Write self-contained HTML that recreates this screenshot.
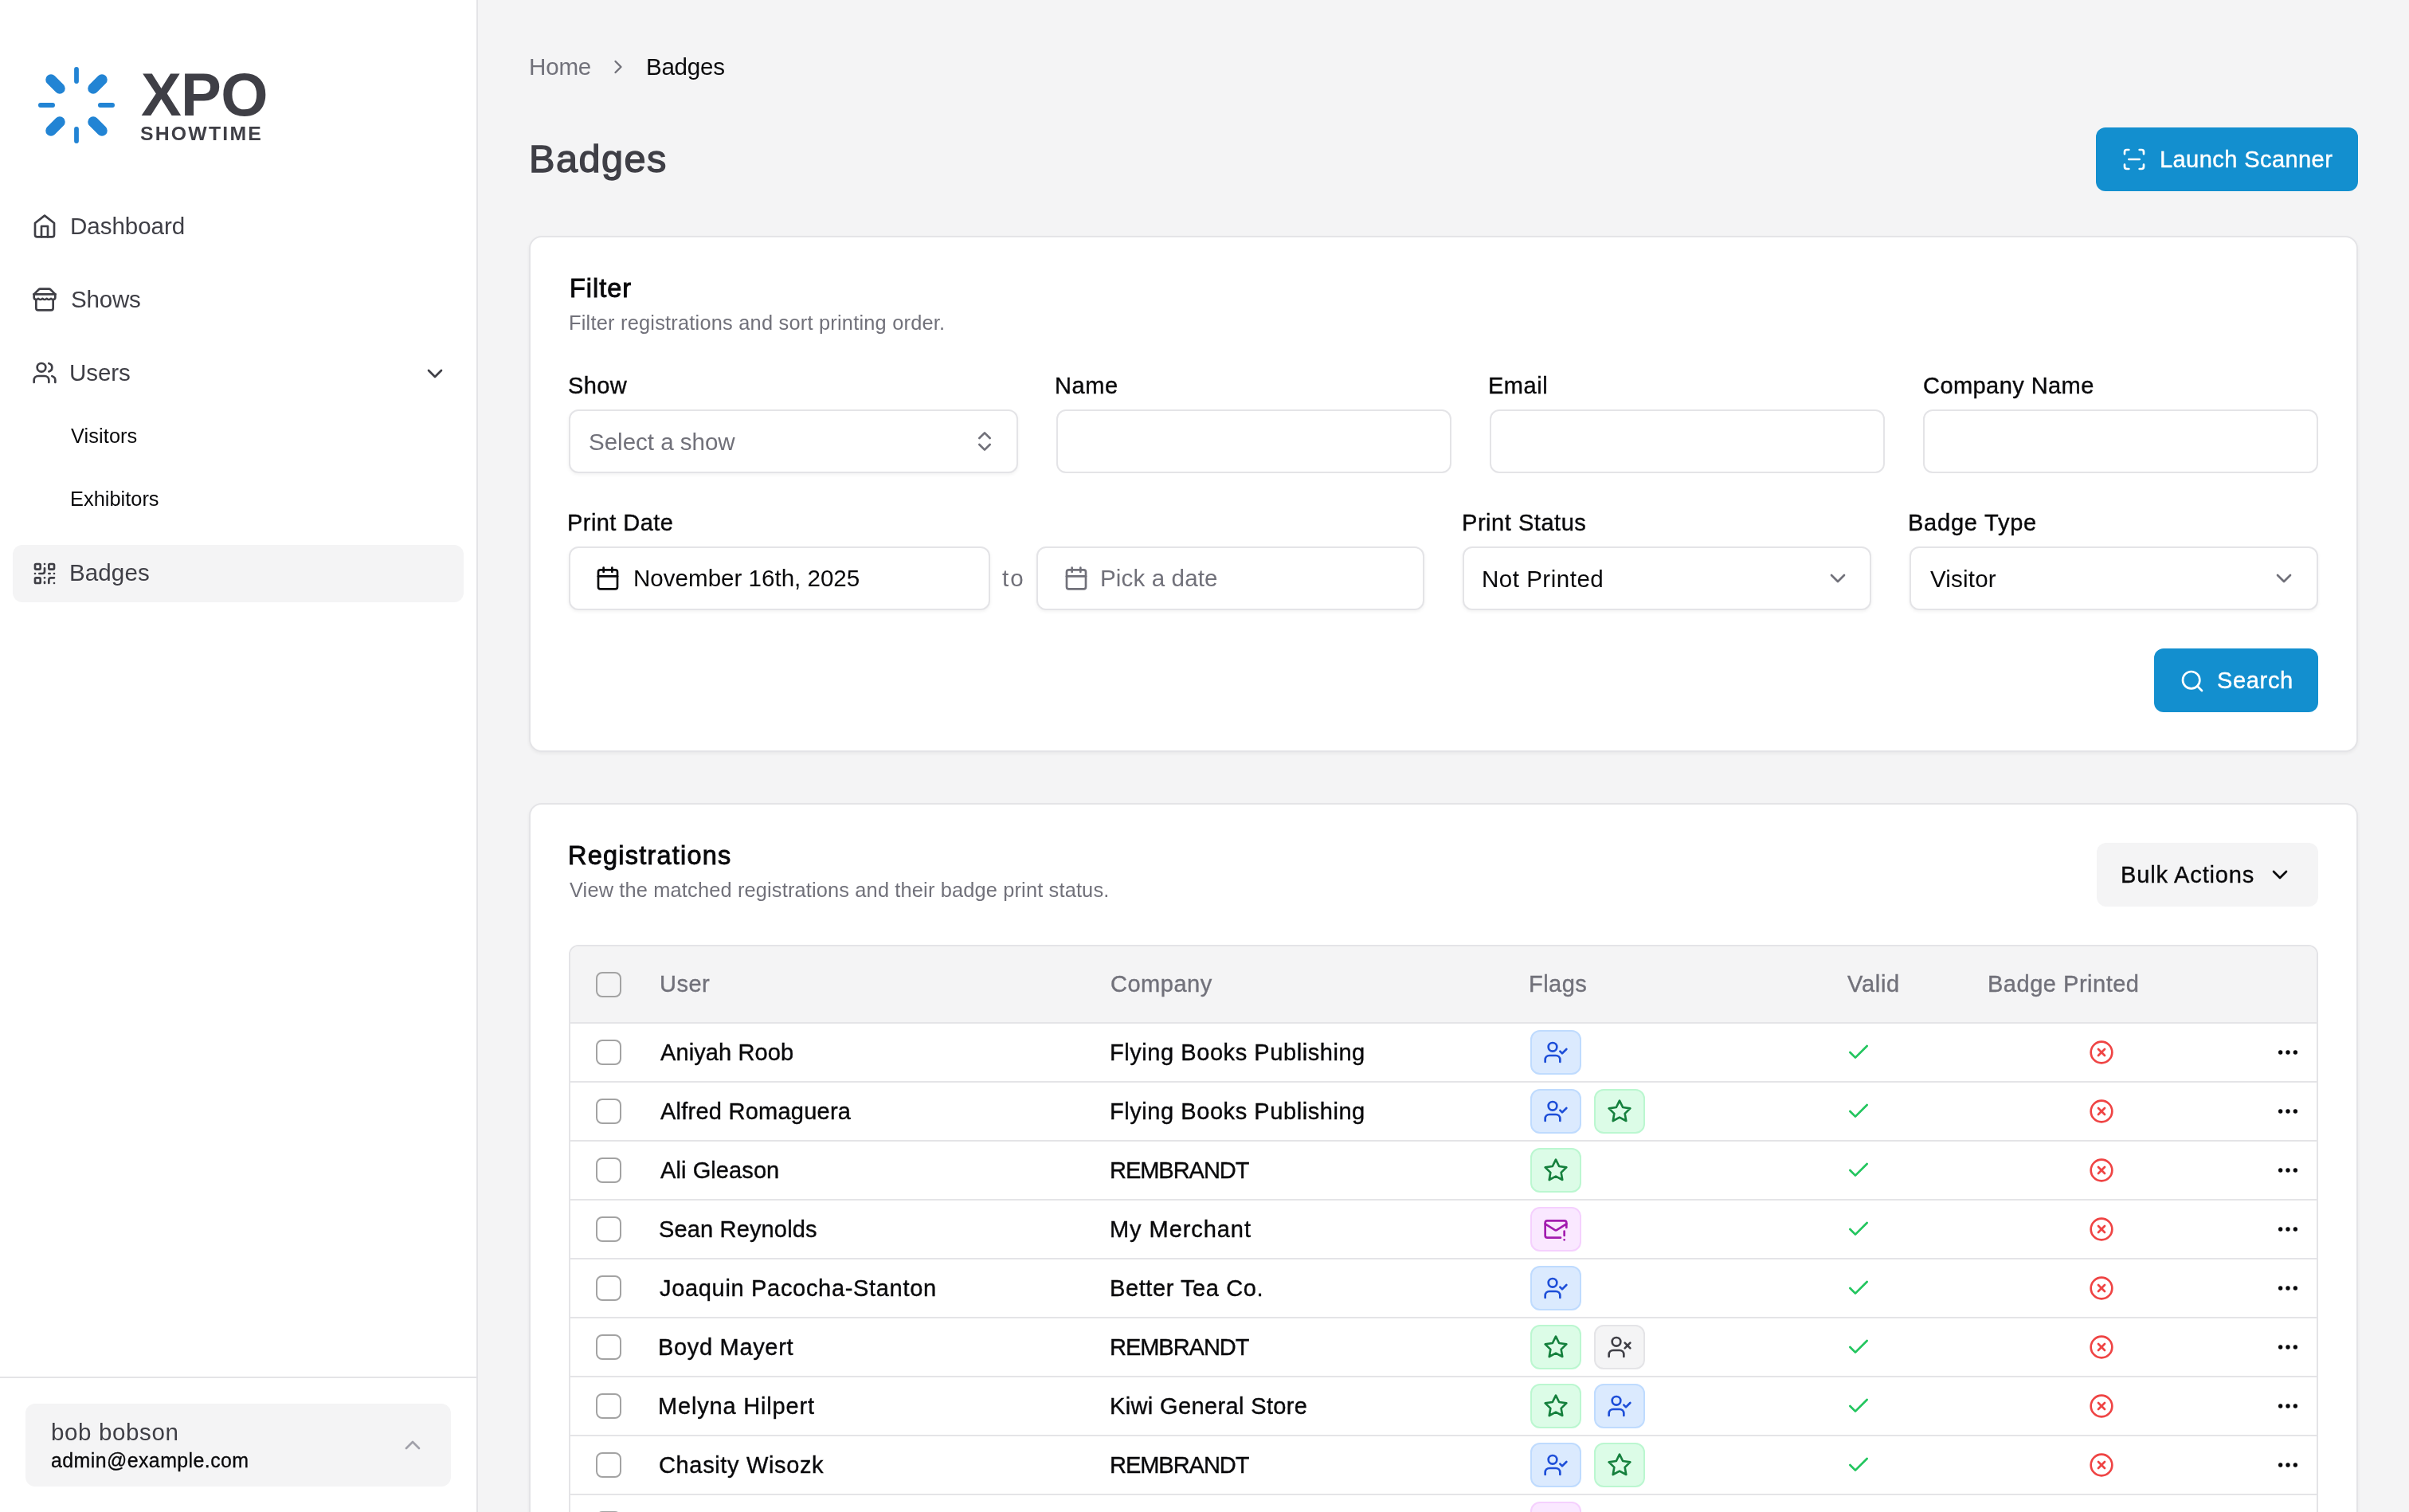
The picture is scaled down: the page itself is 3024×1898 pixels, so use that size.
<!DOCTYPE html><html><head><meta charset="utf-8"><style>
html{zoom:2}@media (max-width:2200px){html{zoom:1}}body{margin:0;width:1512px;height:949px;overflow:hidden;position:relative;background:#f4f4f5;font-family:"Liberation Sans",sans-serif}
.t{position:absolute;white-space:nowrap;line-height:1;will-change:transform}
</style></head><body>
<div style="position:absolute;left:0.00px;top:0.00px;width:299.00px;height:949.00px;background:#fff"></div>
<div style="position:absolute;left:299.00px;top:0.00px;width:1.00px;height:949.00px;background:#e4e4e7"></div>
<svg style="position:absolute;left:23px;top:41px" width="50" height="50" viewBox="46 82 100 100"><g stroke="#2284d4" stroke-linecap="round" fill="none"><path stroke-width="5.8" d="M96 86.9V102.1M96 161.9V177.1M50.9 132H66.1M125.9 132H141.1"/><path stroke-width="13.5" d="M75 111L64 100M117 111L128 100M75 153L64 164M117 153L128 164"/></g></svg>
<div class="t" style="left:88.4px;top:40.69px;font-size:38.1px;font-weight:700;color:#3f3f46;letter-spacing:-0.35px">XPO</div>
<div class="t" style="left:88px;top:78px;font-size:12.4px;font-weight:700;color:#3f3f46;letter-spacing:1.1px">SHOWTIME</div>
<svg style="position:absolute;left:20.00px;top:134.00px" width="16" height="16" viewBox="0 0 24 24" fill="none" stroke="#3f3f46" stroke-width="2" stroke-linecap="round" stroke-linejoin="round"><path d="m3 9 9-7 9 7v11a2 2 0 0 1-2 2H5a2 2 0 0 1-2-2z"/><polyline points="9 22 9 12 15 12 15 22"/></svg>
<svg style="position:absolute;left:20.00px;top:180.00px" width="16" height="16" viewBox="0 0 24 24" fill="none" stroke="#3f3f46" stroke-width="2" stroke-linecap="round" stroke-linejoin="round"><path d="m2 7 4.41-4.41A2 2 0 0 1 7.83 2h8.34a2 2 0 0 1 1.42.59L22 7"/><path d="M4 12v8a2 2 0 0 0 2 2h12a2 2 0 0 0 2-2v-8"/><path d="M2 7h20"/><path d="M22 7v3a2 2 0 0 1-2 2a2.7 2.7 0 0 1-1.59-.63.7.7 0 0 0-.82 0A2.7 2.7 0 0 1 16 12a2.7 2.7 0 0 1-1.59-.63.7.7 0 0 0-.82 0A2.7 2.7 0 0 1 12 12a2.7 2.7 0 0 1-1.59-.63.7.7 0 0 0-.82 0A2.7 2.7 0 0 1 8 12a2.7 2.7 0 0 1-1.59-.63.7.7 0 0 0-.82 0A2.7 2.7 0 0 1 4 12a2 2 0 0 1-2-2V7"/></svg>
<svg style="position:absolute;left:20.00px;top:226.00px" width="16" height="16" viewBox="0 0 24 24" fill="none" stroke="#3f3f46" stroke-width="2" stroke-linecap="round" stroke-linejoin="round"><path d="M16 21v-2a4 4 0 0 0-4-4H6a4 4 0 0 0-4 4v2"/><circle cx="9" cy="7" r="4"/><path d="M22 21v-2a4 4 0 0 0-3-3.87"/><path d="M16 3.13a4 4 0 0 1 0 7.75"/></svg>
<svg style="position:absolute;left:265.00px;top:226.25px" width="16" height="16" viewBox="0 0 24 24" fill="none" stroke="#3f3f46" stroke-width="2" stroke-linecap="round" stroke-linejoin="round"><path d="m6 9 6 6 6-6"/></svg>
<div style="position:absolute;left:8.00px;top:342.00px;width:283.00px;height:36.00px;background:#f4f4f5;border-radius:6px"></div>
<svg style="position:absolute;left:20.00px;top:352.00px" width="16" height="16" viewBox="0 0 24 24" fill="none" stroke="#3f3f46" stroke-width="2" stroke-linecap="round" stroke-linejoin="round"><rect width="5" height="5" x="3" y="3" rx="1"/><rect width="5" height="5" x="16" y="3" rx="1"/><rect width="5" height="5" x="3" y="16" rx="1"/><path d="M21 16h-3a2 2 0 0 0-2 2v3"/><path d="M21 21v.01"/><path d="M12 7v3a2 2 0 0 1-2 2H7"/><path d="M3 12h.01"/><path d="M12 3h.01"/><path d="M12 16v.01"/><path d="M16 12h1"/><path d="M21 12v.01"/><path d="M12 21v-1"/></svg>
<div style="position:absolute;left:0.00px;top:864.00px;width:299.00px;height:1.00px;background:#e4e4e7"></div>
<div style="position:absolute;left:16.00px;top:881.00px;width:267.00px;height:52.00px;background:#f4f4f5;border-radius:6px"></div>
<svg style="position:absolute;left:251.00px;top:899.00px" width="16" height="16" viewBox="0 0 24 24" fill="none" stroke="#a1a1aa" stroke-width="2" stroke-linecap="round" stroke-linejoin="round"><path d="m18 15-6-6-6 6"/></svg>
<svg style="position:absolute;left:380.85px;top:35.05px" width="14" height="14" viewBox="0 0 24 24" fill="none" stroke="#71717a" stroke-width="2" stroke-linecap="round" stroke-linejoin="round"><path d="m9 18 6-6-6-6"/></svg>
<div style="position:absolute;left:1315.50px;top:80.00px;width:164.50px;height:40.00px;background:#138fcf;border-radius:6px"></div>
<svg style="position:absolute;left:1331.30px;top:92.20px" width="16" height="16" viewBox="0 0 24 24" fill="none" stroke="#fff" stroke-width="2" stroke-linecap="round" stroke-linejoin="round"><path d="M3 7V5a2 2 0 0 1 2-2h2"/><path d="M17 3h2a2 2 0 0 1 2 2v2"/><path d="M21 17v2a2 2 0 0 1-2 2h-2"/><path d="M7 21H5a2 2 0 0 1-2-2v-2"/><path d="M7 12h10"/></svg>
<div style="position:absolute;left:332.00px;top:148.00px;width:1148.00px;height:324.00px;background:#fff;border:1px solid #e4e4e7;box-sizing:border-box;border-radius:8px;box-shadow:0 1px 2px rgba(0,0,0,0.05)"></div>
<div style="position:absolute;left:357.00px;top:257.00px;width:282.00px;height:40.00px;background:#fff;border:1px solid #e4e4e7;box-sizing:border-box;border-radius:6px;box-shadow:0 1px 2px rgba(0,0,0,0.05)"></div>
<div style="position:absolute;left:663.00px;top:257.00px;width:248.00px;height:40.00px;background:#fff;border:1px solid #e4e4e7;box-sizing:border-box;border-radius:6px"></div>
<div style="position:absolute;left:935.00px;top:257.00px;width:248.00px;height:40.00px;background:#fff;border:1px solid #e4e4e7;box-sizing:border-box;border-radius:6px"></div>
<div style="position:absolute;left:1207.00px;top:257.00px;width:248.00px;height:40.00px;background:#fff;border:1px solid #e4e4e7;box-sizing:border-box;border-radius:6px"></div>
<svg style="position:absolute;left:610.00px;top:269.00px" width="16" height="16" viewBox="0 0 24 24" fill="none" stroke="#71717a" stroke-width="2" stroke-linecap="round" stroke-linejoin="round"><path d="m7 15 5 5 5-5"/><path d="m7 9 5-5 5 5"/></svg>
<div style="position:absolute;left:357.00px;top:343.00px;width:264.50px;height:40.00px;background:#fff;border:1px solid #e4e4e7;box-sizing:border-box;border-radius:6px;box-shadow:0 1px 2px rgba(0,0,0,0.05)"></div>
<div style="position:absolute;left:650.50px;top:343.00px;width:243.50px;height:40.00px;background:#fff;border:1px solid #e4e4e7;box-sizing:border-box;border-radius:6px;box-shadow:0 1px 2px rgba(0,0,0,0.05)"></div>
<div style="position:absolute;left:918.00px;top:343.00px;width:256.50px;height:40.00px;background:#fff;border:1px solid #e4e4e7;box-sizing:border-box;border-radius:6px;box-shadow:0 1px 2px rgba(0,0,0,0.05)"></div>
<div style="position:absolute;left:1198.50px;top:343.00px;width:256.50px;height:40.00px;background:#fff;border:1px solid #e4e4e7;box-sizing:border-box;border-radius:6px;box-shadow:0 1px 2px rgba(0,0,0,0.05)"></div>
<svg style="position:absolute;left:373.50px;top:355.00px" width="16" height="16" viewBox="0 0 24 24" fill="none" stroke="#09090b" stroke-width="2" stroke-linecap="round" stroke-linejoin="round"><path d="M8 2v4"/><path d="M16 2v4"/><rect width="18" height="18" x="3" y="4" rx="2"/><path d="M3 10h18"/></svg>
<svg style="position:absolute;left:667.50px;top:355.00px" width="16" height="16" viewBox="0 0 24 24" fill="none" stroke="#71717a" stroke-width="2" stroke-linecap="round" stroke-linejoin="round"><path d="M8 2v4"/><path d="M16 2v4"/><rect width="18" height="18" x="3" y="4" rx="2"/><path d="M3 10h18"/></svg>
<svg style="position:absolute;left:1145.40px;top:355.00px" width="16" height="16" viewBox="0 0 24 24" fill="none" stroke="#71717a" stroke-width="2" stroke-linecap="round" stroke-linejoin="round"><path d="m6 9 6 6 6-6"/></svg>
<svg style="position:absolute;left:1425.70px;top:355.00px" width="16" height="16" viewBox="0 0 24 24" fill="none" stroke="#71717a" stroke-width="2" stroke-linecap="round" stroke-linejoin="round"><path d="m6 9 6 6 6-6"/></svg>
<div style="position:absolute;left:1352.00px;top:407.00px;width:103.00px;height:40.00px;background:#138fcf;border-radius:6px"></div>
<svg style="position:absolute;left:1368.00px;top:419.40px" width="16" height="16" viewBox="0 0 24 24" fill="none" stroke="#fff" stroke-width="2" stroke-linecap="round" stroke-linejoin="round"><circle cx="11" cy="11" r="8"/><path d="m21 21-4.3-4.3"/></svg>
<div style="position:absolute;left:332.00px;top:504.00px;width:1148.00px;height:600.00px;background:#fff;border:1px solid #e4e4e7;box-sizing:border-box;border-radius:8px;box-shadow:0 1px 2px rgba(0,0,0,0.05)"></div>
<div style="position:absolute;left:1316.00px;top:529.00px;width:139.00px;height:40.00px;background:#f4f4f5;border-radius:6px"></div>
<svg style="position:absolute;left:1423.00px;top:541.00px" width="16" height="16" viewBox="0 0 24 24" fill="none" stroke="#09090b" stroke-width="2" stroke-linecap="round" stroke-linejoin="round"><path d="m6 9 6 6 6-6"/></svg>
<div style="position:absolute;left:357.00px;top:593.00px;width:1098.00px;height:400.00px;border:1px solid #e4e4e7;box-sizing:border-box;border-radius:6px;overflow:hidden"></div>
<div style="position:absolute;left:358.00px;top:594.00px;width:1096.00px;height:47.50px;background:#f4f4f5;border-radius:5px 5px 0 0"></div>
<div style="position:absolute;left:358.00px;top:641.50px;width:1096.00px;height:1.00px;background:#e4e4e7"></div>
<div style="position:absolute;left:358.00px;top:678.50px;width:1096.00px;height:1.00px;background:#e4e4e7"></div>
<div style="position:absolute;left:358.00px;top:715.50px;width:1096.00px;height:1.00px;background:#e4e4e7"></div>
<div style="position:absolute;left:358.00px;top:752.50px;width:1096.00px;height:1.00px;background:#e4e4e7"></div>
<div style="position:absolute;left:358.00px;top:789.50px;width:1096.00px;height:1.00px;background:#e4e4e7"></div>
<div style="position:absolute;left:358.00px;top:826.50px;width:1096.00px;height:1.00px;background:#e4e4e7"></div>
<div style="position:absolute;left:358.00px;top:863.50px;width:1096.00px;height:1.00px;background:#e4e4e7"></div>
<div style="position:absolute;left:358.00px;top:900.50px;width:1096.00px;height:1.00px;background:#e4e4e7"></div>
<div style="position:absolute;left:358.00px;top:937.50px;width:1096.00px;height:1.00px;background:#e4e4e7"></div>
<div style="position:absolute;left:374.00px;top:610.00px;width:16.00px;height:16.00px;border:1px solid #a3a3a3;box-sizing:border-box;border-radius:4px"></div>
<div style="position:absolute;left:374.00px;top:652.50px;width:16.00px;height:16.00px;border:1px solid #a3a3a3;box-sizing:border-box;border-radius:4px"></div>
<div style="position:absolute;left:960.50px;top:646.50px;width:32.00px;height:28.00px;background:#dbeafe;border:1px solid #bfdbfe;box-sizing:border-box;border-radius:6px"></div>
<svg style="position:absolute;left:968.30px;top:652.50px" width="16" height="16" viewBox="0 0 24 24" fill="none" stroke="#1d4ed8" stroke-width="2" stroke-linecap="round" stroke-linejoin="round"><path d="M16 21v-2a4 4 0 0 0-4-4H6a4 4 0 0 0-4 4v2"/><circle cx="9" cy="7" r="4"/><polyline points="16 11 18 13 22 9"/></svg>
<svg style="position:absolute;left:1158.40px;top:652.50px" width="16" height="16" viewBox="0 0 24 24" fill="none" stroke="#22c55e" stroke-width="2" stroke-linecap="round" stroke-linejoin="round"><path d="M20 6 9 17l-5-5"/></svg>
<svg style="position:absolute;left:1310.80px;top:652.50px" width="16" height="16" viewBox="0 0 24 24" fill="none" stroke="#ef4444" stroke-width="2" stroke-linecap="round" stroke-linejoin="round"><circle cx="12" cy="12" r="10"/><path d="m15 9-6 6"/><path d="m9 9 6 6"/></svg>
<svg style="position:absolute;left:1427.80px;top:652.50px" width="16" height="16" viewBox="0 0 24 24" fill="none" stroke="#09090b" stroke-width="2" stroke-linecap="round" stroke-linejoin="round"><circle cx="12" cy="12" r="1"/><circle cx="19" cy="12" r="1"/><circle cx="5" cy="12" r="1"/></svg>
<div style="position:absolute;left:374.00px;top:689.50px;width:16.00px;height:16.00px;border:1px solid #a3a3a3;box-sizing:border-box;border-radius:4px"></div>
<div style="position:absolute;left:960.50px;top:683.50px;width:32.00px;height:28.00px;background:#dbeafe;border:1px solid #bfdbfe;box-sizing:border-box;border-radius:6px"></div>
<svg style="position:absolute;left:968.30px;top:689.50px" width="16" height="16" viewBox="0 0 24 24" fill="none" stroke="#1d4ed8" stroke-width="2" stroke-linecap="round" stroke-linejoin="round"><path d="M16 21v-2a4 4 0 0 0-4-4H6a4 4 0 0 0-4 4v2"/><circle cx="9" cy="7" r="4"/><polyline points="16 11 18 13 22 9"/></svg>
<div style="position:absolute;left:1000.50px;top:683.50px;width:32.00px;height:28.00px;background:#dcfce7;border:1px solid #bbf7d0;box-sizing:border-box;border-radius:6px"></div>
<svg style="position:absolute;left:1008.30px;top:689.50px" width="16" height="16" viewBox="0 0 24 24" fill="none" stroke="#15803d" stroke-width="2" stroke-linecap="round" stroke-linejoin="round"><polygon points="12 2 15.09 8.26 22 9.27 17 14.14 18.18 21.02 12 17.77 5.82 21.02 7 14.14 2 9.27 8.91 8.26 12 2"/></svg>
<svg style="position:absolute;left:1158.40px;top:689.50px" width="16" height="16" viewBox="0 0 24 24" fill="none" stroke="#22c55e" stroke-width="2" stroke-linecap="round" stroke-linejoin="round"><path d="M20 6 9 17l-5-5"/></svg>
<svg style="position:absolute;left:1310.80px;top:689.50px" width="16" height="16" viewBox="0 0 24 24" fill="none" stroke="#ef4444" stroke-width="2" stroke-linecap="round" stroke-linejoin="round"><circle cx="12" cy="12" r="10"/><path d="m15 9-6 6"/><path d="m9 9 6 6"/></svg>
<svg style="position:absolute;left:1427.80px;top:689.50px" width="16" height="16" viewBox="0 0 24 24" fill="none" stroke="#09090b" stroke-width="2" stroke-linecap="round" stroke-linejoin="round"><circle cx="12" cy="12" r="1"/><circle cx="19" cy="12" r="1"/><circle cx="5" cy="12" r="1"/></svg>
<div style="position:absolute;left:374.00px;top:726.50px;width:16.00px;height:16.00px;border:1px solid #a3a3a3;box-sizing:border-box;border-radius:4px"></div>
<div style="position:absolute;left:960.50px;top:720.50px;width:32.00px;height:28.00px;background:#dcfce7;border:1px solid #bbf7d0;box-sizing:border-box;border-radius:6px"></div>
<svg style="position:absolute;left:968.30px;top:726.50px" width="16" height="16" viewBox="0 0 24 24" fill="none" stroke="#15803d" stroke-width="2" stroke-linecap="round" stroke-linejoin="round"><polygon points="12 2 15.09 8.26 22 9.27 17 14.14 18.18 21.02 12 17.77 5.82 21.02 7 14.14 2 9.27 8.91 8.26 12 2"/></svg>
<svg style="position:absolute;left:1158.40px;top:726.50px" width="16" height="16" viewBox="0 0 24 24" fill="none" stroke="#22c55e" stroke-width="2" stroke-linecap="round" stroke-linejoin="round"><path d="M20 6 9 17l-5-5"/></svg>
<svg style="position:absolute;left:1310.80px;top:726.50px" width="16" height="16" viewBox="0 0 24 24" fill="none" stroke="#ef4444" stroke-width="2" stroke-linecap="round" stroke-linejoin="round"><circle cx="12" cy="12" r="10"/><path d="m15 9-6 6"/><path d="m9 9 6 6"/></svg>
<svg style="position:absolute;left:1427.80px;top:726.50px" width="16" height="16" viewBox="0 0 24 24" fill="none" stroke="#09090b" stroke-width="2" stroke-linecap="round" stroke-linejoin="round"><circle cx="12" cy="12" r="1"/><circle cx="19" cy="12" r="1"/><circle cx="5" cy="12" r="1"/></svg>
<div style="position:absolute;left:374.00px;top:763.50px;width:16.00px;height:16.00px;border:1px solid #a3a3a3;box-sizing:border-box;border-radius:4px"></div>
<div style="position:absolute;left:960.50px;top:757.50px;width:32.00px;height:28.00px;background:#fae8ff;border:1px solid #f5d0fe;box-sizing:border-box;border-radius:6px"></div>
<svg style="position:absolute;left:968.30px;top:763.50px" width="16" height="16" viewBox="0 0 24 24" fill="none" stroke="#a21caf" stroke-width="2" stroke-linecap="round" stroke-linejoin="round"><path d="M22 10.5V6a2 2 0 0 0-2-2H4a2 2 0 0 0-2 2v12c0 1.1.9 2 2 2h12.5"/><path d="m22 7-8.97 5.7a1.94 1.94 0 0 1-2.06 0L2 7"/><path d="M20 14v4"/><path d="M20 22v.01"/></svg>
<svg style="position:absolute;left:1158.40px;top:763.50px" width="16" height="16" viewBox="0 0 24 24" fill="none" stroke="#22c55e" stroke-width="2" stroke-linecap="round" stroke-linejoin="round"><path d="M20 6 9 17l-5-5"/></svg>
<svg style="position:absolute;left:1310.80px;top:763.50px" width="16" height="16" viewBox="0 0 24 24" fill="none" stroke="#ef4444" stroke-width="2" stroke-linecap="round" stroke-linejoin="round"><circle cx="12" cy="12" r="10"/><path d="m15 9-6 6"/><path d="m9 9 6 6"/></svg>
<svg style="position:absolute;left:1427.80px;top:763.50px" width="16" height="16" viewBox="0 0 24 24" fill="none" stroke="#09090b" stroke-width="2" stroke-linecap="round" stroke-linejoin="round"><circle cx="12" cy="12" r="1"/><circle cx="19" cy="12" r="1"/><circle cx="5" cy="12" r="1"/></svg>
<div style="position:absolute;left:374.00px;top:800.50px;width:16.00px;height:16.00px;border:1px solid #a3a3a3;box-sizing:border-box;border-radius:4px"></div>
<div style="position:absolute;left:960.50px;top:794.50px;width:32.00px;height:28.00px;background:#dbeafe;border:1px solid #bfdbfe;box-sizing:border-box;border-radius:6px"></div>
<svg style="position:absolute;left:968.30px;top:800.50px" width="16" height="16" viewBox="0 0 24 24" fill="none" stroke="#1d4ed8" stroke-width="2" stroke-linecap="round" stroke-linejoin="round"><path d="M16 21v-2a4 4 0 0 0-4-4H6a4 4 0 0 0-4 4v2"/><circle cx="9" cy="7" r="4"/><polyline points="16 11 18 13 22 9"/></svg>
<svg style="position:absolute;left:1158.40px;top:800.50px" width="16" height="16" viewBox="0 0 24 24" fill="none" stroke="#22c55e" stroke-width="2" stroke-linecap="round" stroke-linejoin="round"><path d="M20 6 9 17l-5-5"/></svg>
<svg style="position:absolute;left:1310.80px;top:800.50px" width="16" height="16" viewBox="0 0 24 24" fill="none" stroke="#ef4444" stroke-width="2" stroke-linecap="round" stroke-linejoin="round"><circle cx="12" cy="12" r="10"/><path d="m15 9-6 6"/><path d="m9 9 6 6"/></svg>
<svg style="position:absolute;left:1427.80px;top:800.50px" width="16" height="16" viewBox="0 0 24 24" fill="none" stroke="#09090b" stroke-width="2" stroke-linecap="round" stroke-linejoin="round"><circle cx="12" cy="12" r="1"/><circle cx="19" cy="12" r="1"/><circle cx="5" cy="12" r="1"/></svg>
<div style="position:absolute;left:374.00px;top:837.50px;width:16.00px;height:16.00px;border:1px solid #a3a3a3;box-sizing:border-box;border-radius:4px"></div>
<div style="position:absolute;left:960.50px;top:831.50px;width:32.00px;height:28.00px;background:#dcfce7;border:1px solid #bbf7d0;box-sizing:border-box;border-radius:6px"></div>
<svg style="position:absolute;left:968.30px;top:837.50px" width="16" height="16" viewBox="0 0 24 24" fill="none" stroke="#15803d" stroke-width="2" stroke-linecap="round" stroke-linejoin="round"><polygon points="12 2 15.09 8.26 22 9.27 17 14.14 18.18 21.02 12 17.77 5.82 21.02 7 14.14 2 9.27 8.91 8.26 12 2"/></svg>
<div style="position:absolute;left:1000.50px;top:831.50px;width:32.00px;height:28.00px;background:#f4f4f5;border:1px solid #e4e4e7;box-sizing:border-box;border-radius:6px"></div>
<svg style="position:absolute;left:1008.30px;top:837.50px" width="16" height="16" viewBox="0 0 24 24" fill="none" stroke="#3f3f46" stroke-width="2" stroke-linecap="round" stroke-linejoin="round"><path d="M16 21v-2a4 4 0 0 0-4-4H6a4 4 0 0 0-4 4v2"/><circle cx="9" cy="7" r="4"/><line x1="17" x2="22" y1="8" y2="13"/><line x1="22" x2="17" y1="8" y2="13"/></svg>
<svg style="position:absolute;left:1158.40px;top:837.50px" width="16" height="16" viewBox="0 0 24 24" fill="none" stroke="#22c55e" stroke-width="2" stroke-linecap="round" stroke-linejoin="round"><path d="M20 6 9 17l-5-5"/></svg>
<svg style="position:absolute;left:1310.80px;top:837.50px" width="16" height="16" viewBox="0 0 24 24" fill="none" stroke="#ef4444" stroke-width="2" stroke-linecap="round" stroke-linejoin="round"><circle cx="12" cy="12" r="10"/><path d="m15 9-6 6"/><path d="m9 9 6 6"/></svg>
<svg style="position:absolute;left:1427.80px;top:837.50px" width="16" height="16" viewBox="0 0 24 24" fill="none" stroke="#09090b" stroke-width="2" stroke-linecap="round" stroke-linejoin="round"><circle cx="12" cy="12" r="1"/><circle cx="19" cy="12" r="1"/><circle cx="5" cy="12" r="1"/></svg>
<div style="position:absolute;left:374.00px;top:874.50px;width:16.00px;height:16.00px;border:1px solid #a3a3a3;box-sizing:border-box;border-radius:4px"></div>
<div style="position:absolute;left:960.50px;top:868.50px;width:32.00px;height:28.00px;background:#dcfce7;border:1px solid #bbf7d0;box-sizing:border-box;border-radius:6px"></div>
<svg style="position:absolute;left:968.30px;top:874.50px" width="16" height="16" viewBox="0 0 24 24" fill="none" stroke="#15803d" stroke-width="2" stroke-linecap="round" stroke-linejoin="round"><polygon points="12 2 15.09 8.26 22 9.27 17 14.14 18.18 21.02 12 17.77 5.82 21.02 7 14.14 2 9.27 8.91 8.26 12 2"/></svg>
<div style="position:absolute;left:1000.50px;top:868.50px;width:32.00px;height:28.00px;background:#dbeafe;border:1px solid #bfdbfe;box-sizing:border-box;border-radius:6px"></div>
<svg style="position:absolute;left:1008.30px;top:874.50px" width="16" height="16" viewBox="0 0 24 24" fill="none" stroke="#1d4ed8" stroke-width="2" stroke-linecap="round" stroke-linejoin="round"><path d="M16 21v-2a4 4 0 0 0-4-4H6a4 4 0 0 0-4 4v2"/><circle cx="9" cy="7" r="4"/><polyline points="16 11 18 13 22 9"/></svg>
<svg style="position:absolute;left:1158.40px;top:874.50px" width="16" height="16" viewBox="0 0 24 24" fill="none" stroke="#22c55e" stroke-width="2" stroke-linecap="round" stroke-linejoin="round"><path d="M20 6 9 17l-5-5"/></svg>
<svg style="position:absolute;left:1310.80px;top:874.50px" width="16" height="16" viewBox="0 0 24 24" fill="none" stroke="#ef4444" stroke-width="2" stroke-linecap="round" stroke-linejoin="round"><circle cx="12" cy="12" r="10"/><path d="m15 9-6 6"/><path d="m9 9 6 6"/></svg>
<svg style="position:absolute;left:1427.80px;top:874.50px" width="16" height="16" viewBox="0 0 24 24" fill="none" stroke="#09090b" stroke-width="2" stroke-linecap="round" stroke-linejoin="round"><circle cx="12" cy="12" r="1"/><circle cx="19" cy="12" r="1"/><circle cx="5" cy="12" r="1"/></svg>
<div style="position:absolute;left:374.00px;top:911.50px;width:16.00px;height:16.00px;border:1px solid #a3a3a3;box-sizing:border-box;border-radius:4px"></div>
<div style="position:absolute;left:960.50px;top:905.50px;width:32.00px;height:28.00px;background:#dbeafe;border:1px solid #bfdbfe;box-sizing:border-box;border-radius:6px"></div>
<svg style="position:absolute;left:968.30px;top:911.50px" width="16" height="16" viewBox="0 0 24 24" fill="none" stroke="#1d4ed8" stroke-width="2" stroke-linecap="round" stroke-linejoin="round"><path d="M16 21v-2a4 4 0 0 0-4-4H6a4 4 0 0 0-4 4v2"/><circle cx="9" cy="7" r="4"/><polyline points="16 11 18 13 22 9"/></svg>
<div style="position:absolute;left:1000.50px;top:905.50px;width:32.00px;height:28.00px;background:#dcfce7;border:1px solid #bbf7d0;box-sizing:border-box;border-radius:6px"></div>
<svg style="position:absolute;left:1008.30px;top:911.50px" width="16" height="16" viewBox="0 0 24 24" fill="none" stroke="#15803d" stroke-width="2" stroke-linecap="round" stroke-linejoin="round"><polygon points="12 2 15.09 8.26 22 9.27 17 14.14 18.18 21.02 12 17.77 5.82 21.02 7 14.14 2 9.27 8.91 8.26 12 2"/></svg>
<svg style="position:absolute;left:1158.40px;top:911.50px" width="16" height="16" viewBox="0 0 24 24" fill="none" stroke="#22c55e" stroke-width="2" stroke-linecap="round" stroke-linejoin="round"><path d="M20 6 9 17l-5-5"/></svg>
<svg style="position:absolute;left:1310.80px;top:911.50px" width="16" height="16" viewBox="0 0 24 24" fill="none" stroke="#ef4444" stroke-width="2" stroke-linecap="round" stroke-linejoin="round"><circle cx="12" cy="12" r="10"/><path d="m15 9-6 6"/><path d="m9 9 6 6"/></svg>
<svg style="position:absolute;left:1427.80px;top:911.50px" width="16" height="16" viewBox="0 0 24 24" fill="none" stroke="#09090b" stroke-width="2" stroke-linecap="round" stroke-linejoin="round"><circle cx="12" cy="12" r="1"/><circle cx="19" cy="12" r="1"/><circle cx="5" cy="12" r="1"/></svg>
<div style="position:absolute;left:374.00px;top:948.50px;width:16.00px;height:16.00px;border:1px solid #a3a3a3;box-sizing:border-box;border-radius:4px"></div>
<div style="position:absolute;left:960.50px;top:942.50px;width:32.00px;height:28.00px;background:#fae8ff;border:1px solid #f5d0fe;box-sizing:border-box;border-radius:6px"></div>
<svg style="position:absolute;left:968.30px;top:948.50px" width="16" height="16" viewBox="0 0 24 24" fill="none" stroke="#a21caf" stroke-width="2" stroke-linecap="round" stroke-linejoin="round"><path d="M22 10.5V6a2 2 0 0 0-2-2H4a2 2 0 0 0-2 2v12c0 1.1.9 2 2 2h12.5"/><path d="m22 7-8.97 5.7a1.94 1.94 0 0 1-2.06 0L2 7"/><path d="M20 14v4"/><path d="M20 22v.01"/></svg>
<svg style="position:absolute;left:1158.40px;top:948.50px" width="16" height="16" viewBox="0 0 24 24" fill="none" stroke="#22c55e" stroke-width="2" stroke-linecap="round" stroke-linejoin="round"><path d="M20 6 9 17l-5-5"/></svg>
<svg style="position:absolute;left:1310.80px;top:948.50px" width="16" height="16" viewBox="0 0 24 24" fill="none" stroke="#ef4444" stroke-width="2" stroke-linecap="round" stroke-linejoin="round"><circle cx="12" cy="12" r="10"/><path d="m15 9-6 6"/><path d="m9 9 6 6"/></svg>
<svg style="position:absolute;left:1427.80px;top:948.50px" width="16" height="16" viewBox="0 0 24 24" fill="none" stroke="#09090b" stroke-width="2" stroke-linecap="round" stroke-linejoin="round"><circle cx="12" cy="12" r="1"/><circle cx="19" cy="12" r="1"/><circle cx="5" cy="12" r="1"/></svg>
<div class="t" style="left:43.90px;top:134.42px;font-size:14.79px;color:#3f3f46;font-weight:400;letter-spacing:-0.037px;">Dashboard</div>
<div class="t" style="left:44.40px;top:180.32px;font-size:14.79px;color:#3f3f46;font-weight:400;letter-spacing:-0.112px;">Shows</div>
<div class="t" style="left:43.70px;top:226.47px;font-size:14.79px;color:#3f3f46;font-weight:400;letter-spacing:-0.050px;">Users</div>
<div class="t" style="left:44.40px;top:267.26px;font-size:12.68px;color:#09090b;font-weight:400;letter-spacing:0.043px;">Visitors</div>
<div class="t" style="left:43.90px;top:307.06px;font-size:12.68px;color:#09090b;font-weight:400;letter-spacing:0.011px;">Exhibitors</div>
<div class="t" style="left:43.60px;top:352.07px;font-size:14.79px;color:#3f3f46;font-weight:400;letter-spacing:0.040px;">Badges</div>
<div class="t" style="left:32.00px;top:891.57px;font-size:14.79px;color:#3f3f46;font-weight:400;letter-spacing:0.300px;">bob bobson</div>
<div class="t" style="left:32.10px;top:910.36px;font-size:12.45px;color:#09090b;font-weight:400;letter-spacing:0.219px;-webkit-text-stroke:0.162px #09090b;">admin@example.com</div>
<div class="t" style="left:331.90px;top:34.47px;font-size:14.79px;color:#71717a;font-weight:400;letter-spacing:-0.100px;">Home</div>
<div class="t" style="left:405.40px;top:34.47px;font-size:14.79px;color:#09090b;font-weight:400;letter-spacing:-0.140px;">Badges</div>
<div class="t" style="left:332.10px;top:87.57px;font-size:24.37px;color:#3f3f46;font-weight:400;letter-spacing:0.710px;-webkit-text-stroke:0.682px #3f3f46;">Badges</div>
<div class="t" style="left:1355.40px;top:92.96px;font-size:14.52px;color:#ffffff;font-weight:400;letter-spacing:0.208px;-webkit-text-stroke:0.189px #ffffff;">Launch Scanner</div>
<div class="t" style="left:357.30px;top:173.04px;font-size:16.25px;color:#09090b;font-weight:400;letter-spacing:0.480px;-webkit-text-stroke:0.455px #09090b;">Filter</div>
<div class="t" style="left:356.90px;top:196.26px;font-size:12.68px;color:#71717a;font-weight:400;letter-spacing:0.112px;">Filter registrations and sort printing order.</div>
<div class="t" style="left:356.60px;top:235.11px;font-size:14.52px;color:#09090b;font-weight:400;letter-spacing:0.200px;-webkit-text-stroke:0.189px #09090b;">Show</div>
<div class="t" style="left:662.20px;top:235.11px;font-size:14.52px;color:#09090b;font-weight:400;letter-spacing:0.300px;-webkit-text-stroke:0.189px #09090b;">Name</div>
<div class="t" style="left:934.00px;top:235.21px;font-size:14.52px;color:#09090b;font-weight:400;letter-spacing:0.250px;-webkit-text-stroke:0.189px #09090b;">Email</div>
<div class="t" style="left:1207.00px;top:235.21px;font-size:14.52px;color:#09090b;font-weight:400;letter-spacing:0.209px;-webkit-text-stroke:0.189px #09090b;">Company Name</div>
<div class="t" style="left:369.60px;top:269.77px;font-size:14.79px;color:#71717a;font-weight:400;letter-spacing:-0.017px;">Select a show</div>
<div class="t" style="left:356.10px;top:321.01px;font-size:14.52px;color:#09090b;font-weight:400;letter-spacing:0.211px;-webkit-text-stroke:0.189px #09090b;">Print Date</div>
<div class="t" style="left:917.30px;top:321.01px;font-size:14.52px;color:#09090b;font-weight:400;letter-spacing:0.264px;-webkit-text-stroke:0.189px #09090b;">Print Status</div>
<div class="t" style="left:1197.40px;top:321.01px;font-size:14.52px;color:#09090b;font-weight:400;letter-spacing:0.378px;-webkit-text-stroke:0.189px #09090b;">Badge Type</div>
<div class="t" style="left:397.50px;top:355.67px;font-size:14.79px;color:#09090b;font-weight:400;letter-spacing:-0.006px;">November 16th, 2025</div>
<div class="t" style="left:629.10px;top:355.67px;font-size:14.79px;color:#71717a;font-weight:400;letter-spacing:1.000px;">to</div>
<div class="t" style="left:690.30px;top:355.67px;font-size:14.79px;color:#71717a;font-weight:400;letter-spacing:0.060px;">Pick a date</div>
<div class="t" style="left:929.80px;top:356.17px;font-size:14.79px;color:#09090b;font-weight:400;letter-spacing:0.240px;">Not Printed</div>
<div class="t" style="left:1211.60px;top:356.17px;font-size:14.79px;color:#09090b;font-weight:400;letter-spacing:0.083px;">Visitor</div>
<div class="t" style="left:1391.70px;top:420.11px;font-size:14.52px;color:#ffffff;font-weight:400;letter-spacing:0.320px;-webkit-text-stroke:0.189px #ffffff;">Search</div>
<div class="t" style="left:356.60px;top:528.94px;font-size:16.25px;color:#09090b;font-weight:400;letter-spacing:0.608px;-webkit-text-stroke:0.455px #09090b;">Registrations</div>
<div class="t" style="left:357.40px;top:552.36px;font-size:12.68px;color:#71717a;font-weight:400;letter-spacing:0.081px;">View the matched registrations and their badge print status.</div>
<div class="t" style="left:1331.20px;top:542.01px;font-size:14.52px;color:#09090b;font-weight:400;letter-spacing:0.418px;-webkit-text-stroke:0.189px #09090b;">Bulk Actions</div>
<div class="t" style="left:413.90px;top:610.61px;font-size:14.52px;color:#71717a;font-weight:400;letter-spacing:0.233px;-webkit-text-stroke:0.189px #71717a;">User</div>
<div class="t" style="left:696.90px;top:610.71px;font-size:14.52px;color:#71717a;font-weight:400;letter-spacing:0.250px;-webkit-text-stroke:0.189px #71717a;">Company</div>
<div class="t" style="left:959.70px;top:610.61px;font-size:14.52px;color:#71717a;font-weight:400;letter-spacing:0.225px;-webkit-text-stroke:0.189px #71717a;">Flags</div>
<div class="t" style="left:1159.30px;top:610.61px;font-size:14.52px;color:#71717a;font-weight:400;letter-spacing:0.350px;-webkit-text-stroke:0.189px #71717a;">Valid</div>
<div class="t" style="left:1247.30px;top:610.61px;font-size:14.52px;color:#71717a;font-weight:400;letter-spacing:0.250px;-webkit-text-stroke:0.189px #71717a;">Badge Printed</div>
<div class="t" style="left:414.60px;top:653.41px;font-size:14.52px;color:#09090b;font-weight:400;letter-spacing:0.040px;-webkit-text-stroke:0.189px #09090b;">Aniyah Roob</div>
<div class="t" style="left:696.40px;top:653.41px;font-size:14.52px;color:#09090b;font-weight:400;letter-spacing:0.273px;-webkit-text-stroke:0.189px #09090b;">Flying Books Publishing</div>
<div class="t" style="left:414.60px;top:690.41px;font-size:14.52px;color:#09090b;font-weight:400;letter-spacing:0.113px;-webkit-text-stroke:0.189px #09090b;">Alfred Romaguera</div>
<div class="t" style="left:696.40px;top:690.41px;font-size:14.52px;color:#09090b;font-weight:400;letter-spacing:0.273px;-webkit-text-stroke:0.189px #09090b;">Flying Books Publishing</div>
<div class="t" style="left:414.60px;top:727.41px;font-size:14.52px;color:#09090b;font-weight:400;letter-spacing:0.040px;-webkit-text-stroke:0.189px #09090b;">Ali Gleason</div>
<div class="t" style="left:696.40px;top:727.41px;font-size:14.52px;color:#09090b;font-weight:400;letter-spacing:-0.525px;-webkit-text-stroke:0.189px #09090b;">REMBRANDT</div>
<div class="t" style="left:413.60px;top:764.41px;font-size:14.52px;color:#09090b;font-weight:400;letter-spacing:0.067px;-webkit-text-stroke:0.189px #09090b;">Sean Reynolds</div>
<div class="t" style="left:696.40px;top:764.41px;font-size:14.52px;color:#09090b;font-weight:400;letter-spacing:0.460px;-webkit-text-stroke:0.189px #09090b;">My Merchant</div>
<div class="t" style="left:414.10px;top:801.41px;font-size:14.52px;color:#09090b;font-weight:400;letter-spacing:0.332px;-webkit-text-stroke:0.189px #09090b;">Joaquin Pacocha-Stanton</div>
<div class="t" style="left:696.40px;top:801.41px;font-size:14.52px;color:#09090b;font-weight:400;letter-spacing:0.285px;-webkit-text-stroke:0.189px #09090b;">Better Tea Co.</div>
<div class="t" style="left:413.10px;top:838.41px;font-size:14.52px;color:#09090b;font-weight:400;letter-spacing:0.330px;-webkit-text-stroke:0.189px #09090b;">Boyd Mayert</div>
<div class="t" style="left:696.40px;top:838.41px;font-size:14.52px;color:#09090b;font-weight:400;letter-spacing:-0.525px;-webkit-text-stroke:0.189px #09090b;">REMBRANDT</div>
<div class="t" style="left:413.10px;top:875.41px;font-size:14.52px;color:#09090b;font-weight:400;letter-spacing:0.400px;-webkit-text-stroke:0.189px #09090b;">Melyna Hilpert</div>
<div class="t" style="left:696.40px;top:875.41px;font-size:14.52px;color:#09090b;font-weight:400;letter-spacing:0.176px;-webkit-text-stroke:0.189px #09090b;">Kiwi General Store</div>
<div class="t" style="left:413.60px;top:912.41px;font-size:14.52px;color:#09090b;font-weight:400;letter-spacing:0.315px;-webkit-text-stroke:0.189px #09090b;">Chasity Wisozk</div>
<div class="t" style="left:696.40px;top:912.41px;font-size:14.52px;color:#09090b;font-weight:400;letter-spacing:-0.525px;-webkit-text-stroke:0.189px #09090b;">REMBRANDT</div>
</body></html>
